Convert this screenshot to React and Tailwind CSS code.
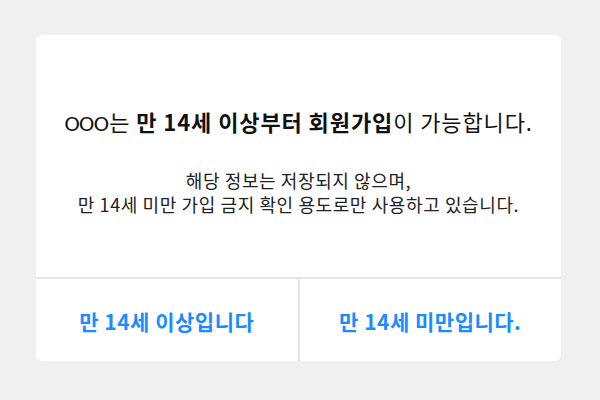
export default function App() {
  return (
    <div
      className="w-[600px] h-[400px] bg-[#f0f0f0] pt-[35px] pl-[36px]"
      style={{ fontFamily: '"Noto Sans CJK KR", "Noto Sans", sans-serif' }}
    >
      <div className="w-[525px] h-[326px] bg-white rounded-[6px] flex flex-col overflow-hidden">
        <div className="flex-1 flex flex-col items-center">
          <p className="mt-[70px] text-[22px] leading-[32px] tracking-[0.9px] text-[#111] whitespace-nowrap">
            <span className="font-[family-name:DejaVu_Sans,sans-serif] text-[20px] tracking-[-1px] mr-[1px]">OOO</span>는{" "}
            <span className="font-bold">만 14세 이상부터 회원가입</span>이 가능합니다.
          </p>
          <p className="mt-[28px] text-[18px] leading-[24px] tracking-[0.6px] text-[#222] text-center whitespace-nowrap">
            해당 정보는 저장되지 않으며,
            <br />
            만 14세 미만 가입 금지 확인 용도로만 사용하고 있습니다.
          </p>
        </div>
        <div className="h-[84px] border-t-2 border-[#e6e6e6] flex">
          <button className="flex-1 flex items-center justify-center pt-[4px] text-[21px] tracking-[0.5px] font-bold text-[#1a8cff]">
            만 14세 이상입니다
          </button>
          <div className="w-[2px] bg-[#e6e6e6]" />
          <button className="flex-1 flex items-center justify-center pt-[4px] text-[21px] tracking-[0.5px] font-bold text-[#1a8cff]">
            만 14세 미만입니다.
          </button>
        </div>
      </div>
    </div>
  );
}
